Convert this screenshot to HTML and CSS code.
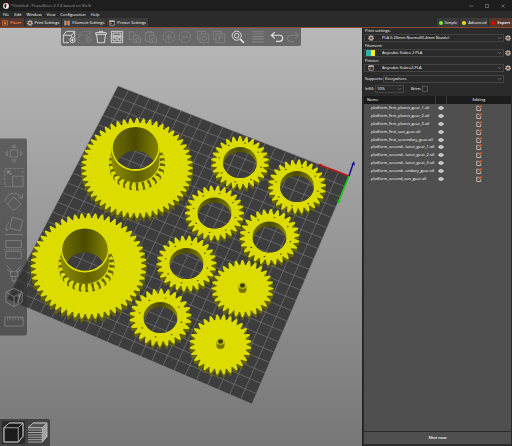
FILE: index.html
```html
<!DOCTYPE html>
<html lang="en">
<head>
<meta charset="utf-8">
<title>*Untitled - PrusaSlicer-2.7.4 based on Slic3r</title>
<link rel="stylesheet" href="styles.css">
</head>
<body>
<svg class="defs" aria-hidden="true">
  <symbol id="chev" viewBox="0 0 5 4"><path d="M.7 1 2.5 2.8 4.3 1" fill="none" stroke="#8c8c8c" stroke-width=".6"/></symbol>
  <symbol id="cog" viewBox="0 0 12 12"><circle cx="6" cy="6" r="4.6" fill="none" stroke="#c9c1bb" stroke-width="2.2" stroke-dasharray="2.4 1.2"/><circle cx="6" cy="6" r="3.8" fill="#cfc7c2"/><circle cx="6" cy="6" r="2.4" fill="#8a4a2a"/></symbol>
  <symbol id="eye" viewBox="0 0 12 8"><path d="M0 4Q6-4 12 4Q6 12 0 4Z" fill="#d6d6d6"/><circle cx="6" cy="4" r="1.3" fill="#8b8b8b"/></symbol>
  <symbol id="edit" viewBox="0 0 12 12"><path d="M7 2.5H1.5V11H9.500V6" fill="none" stroke="#d8c9c0" stroke-width="1.600"/><path d="M5 7.500 9.500 2.500" stroke="#d2622e" stroke-width="2"/><circle cx="9.600" cy="2.600" r="2.300" fill="#d2622e"/></symbol>
  <symbol id="printer" viewBox="0 0 12 12"><path d="M1.500 10.500V1.500H10.500V10.500Z" fill="#222" stroke="#c9c9c9" stroke-width="1.300"/><path d="M1 2.500H11" stroke="#ddd" stroke-width="2"/><path d="M3 5.500H6V8H3Z" fill="#e06a2c"/></symbol>
  <symbol id="spool" viewBox="0 0 12 12"><path d="M1 1H3.500V11H1ZM8.500 1H11V11H8.500Z" fill="#cfc7c2"/><path d="M3.500 2H8.500V10H3.500Z" fill="#c4602e"/></symbol>
  <symbol id="plater" viewBox="0 0 12 12"><path d="M1 1.500H11V10.500H1Z" fill="none" stroke="#e0703a" stroke-width="1.400"/><path d="M3.500 3.500H8.500V8.500H3.500Z" fill="#ed6b21"/></symbol>
</svg>

<header class="head">
  <div class="titlebar">
    <svg class="logo" viewBox="0 0 12 12"><circle cx="6" cy="6" r="5.800" fill="#eee"/><path d="M6 1Q1 4 3 8L6 11Z" fill="#1b1b1b"/><path d="M7 1.500Q9 3 7.500 6H5.500Q5.500 3 7 1.500Z" fill="#ed6b21"/></svg>
    <span class="title">*Untitled - PrusaSlicer-2.7.4 based on Slic3r</span>
    <div class="wins">
      <button aria-label="Minimize"><svg viewBox="0 0 6 6"><path d="M1 3H5"/></svg></button>
      <button aria-label="Maximize"><svg viewBox="0 0 6 6"><path d="M1.500 1.500H4.500V4.500H1.500Z"/></svg></button>
      <button aria-label="Close"><svg viewBox="0 0 6 6"><path d="M1.500 1.500 4.500 4.500M4.500 1.500 1.500 4.500"/></svg></button>
    </div>
  </div>
  <nav class="menu">
    <button>File</button><button>Edit</button><button>Window</button><button>View</button><button>Configuration</button><button>Help</button>
  </nav>
  <div class="tabs">
    <button class="tab on"><svg><use href="#plater"/></svg>Plater</button>
    <button class="tab"><svg><use href="#cog"/></svg>Print Settings</button>
    <button class="tab"><svg><use href="#spool"/></svg>Filament Settings</button>
    <button class="tab"><svg><use href="#printer"/></svg>Printer Settings</button>
    <div class="modes">
      <button class="tab"><i class="dot green"></i>Simple</button>
      <button class="tab"><i class="dot amber"></i>Advanced</button>
      <button class="tab on light"><i class="dot red"></i>Expert</button>
    </div>
  </div>
</header>

<main class="work">
  <section class="view" aria-label="3D view">
    <svg class="scene" id="scene" viewBox="0 28 362 418" preserveAspectRatio="xMidYMid slice"></svg>

    <div class="toolbar">
      <div class="grp">
        <button aria-label="Add"><svg viewBox="0 0 16 16"><path d="M1.500 6 5 1.500H14.500L11 6ZM1.500 6V14.500H8M11 6V8M14.500 1.500V8.500"/><circle cx="12" cy="11.500" r="3"/><path d="M12 9.800V13.200M10.300 11.500H13.700"/></svg></button>
        <button disabled aria-label="Delete"><svg viewBox="0 0 16 16"><path stroke-dasharray="1.500 1" d="M1.500 6 5 1.500H14.500L11 6ZM1.500 6V14.500H8M11 6V8M14.500 1.500V8.500"/><circle cx="12" cy="11.500" r="3"/><path d="M10.300 11.500H13.700"/></svg></button>
        <button aria-label="Delete all"><svg viewBox="0 0 16 16"><path d="M2 3H14V5H2ZM6 3V1.500H10V3M3 5 4 14.500H12L13 5"/></svg></button>
        <button aria-label="Arrange"><svg viewBox="0 0 16 16"><path d="M1.500 1.500H14.500V14.500H1.500ZM3.500 3.500H12.500V6.500H3.500ZM3.500 9H7V12.500H3.500ZM9 9H12.500V12.500H9ZM1.500 7.800H14.500"/></svg></button>
      </div>
      <div class="grp">
        <button disabled aria-label="Copy"><svg viewBox="0 0 16 16"><path d="M6 11H1.500V2H6L9 5V6M6.500 6H11L14.500 9V14.500H6.500Z"/><circle cx="10.500" cy="11" r="1.800"/></svg></button>
        <button disabled aria-label="Paste"><svg viewBox="0 0 16 16"><path d="M6 13H1.500V3H11V6M4 3V1.500H8.500V3M6.500 6H11L14.500 9V14.500H6.500Z"/><circle cx="10.500" cy="11" r="1.800"/></svg></button>
      </div>
      <div class="grp">
        <button disabled aria-label="Add instance"><svg viewBox="0 0 16 16"><circle cx="8" cy="8" r="6.500" stroke-dasharray="3 1"/><path d="M8 4.500V11.500M4.500 8H11.500"/></svg></button>
        <button disabled aria-label="Remove instance"><svg viewBox="0 0 16 16"><circle cx="8" cy="8" r="6.500" stroke-dasharray="3 1"/><path d="M4.500 8H11.500"/></svg></button>
      </div>
      <div class="grp">
        <button disabled aria-label="Split to objects"><svg viewBox="0 0 16 16"><path d="M4 11H1.500V1.500H11V4M4.500 4.500H14.500V14.500H4.500Z"/><circle cx="9.500" cy="9.500" r="2.500"/></svg></button>
        <button disabled aria-label="Split to parts"><svg viewBox="0 0 16 16"><path d="M4 11H1.500V1.500H11V4M4.500 4.500H14.500V14.500H4.500ZM8 12.500V7H10Q11.500 7 11.500 8.500T10 10H8"/></svg></button>
      </div>
      <div class="grp one"><button aria-label="Search"><svg viewBox="0 0 16 16"><circle cx="6.500" cy="6.500" r="5.200"/><circle cx="6.500" cy="6.500" r="2.600"/><path stroke-width="2" d="M10.500 10.500 14.800 14.800"/></svg></button></div>
      <div class="grp one"><button disabled aria-label="Variable layer height"><svg viewBox="0 0 16 16"><path d="M1.500 2H14.500M1.500 4.500H14.500" /><path stroke-width="1.500" d="M1.500 7.500H14.500M1.500 10.500H14.500M1.500 13.500H14.500"/></svg></button></div>
      <div class="grp">
        <button aria-label="Undo"><svg viewBox="0 0 16 16"><path stroke-width="1.300" d="M5.500 2.500 1.500 6 5.500 9.500M1.500 6H11Q14.500 6 14.500 9.500T11 13H7"/></svg></button>
        <button disabled aria-label="Redo"><svg viewBox="0 0 16 16"><path d="M10.500 2.500 14.500 6 10.500 9.500M14.500 6H5Q1.500 6 1.500 9.500T5 13H9"/></svg></button>
      </div>
    </div>

    <div class="gizmos">
      <button aria-label="Move"><svg viewBox="0 0 22 22"><path d="M7 7H15V15H7ZM8.500 4 11 1 13.500 4ZM8.500 18 11 21 13.500 18ZM4 8.500 1 11 4 13.500ZM18 8.500 21 11 18 13.500Z"/></svg></button>
      <button aria-label="Scale"><svg viewBox="0 0 22 22"><path d="M9.500 9.500H21V21H9.500Z"/><path stroke-dasharray="3 1.500" d="M8 21H1V1H21V8"/><path stroke-width="1.500" d="M8 8 4 4M4 7V4H7"/></svg></button>
      <button aria-label="Rotate"><svg viewBox="0 0 22 22"><path d="M11 6 18.500 13.500 11 21 3.500 13.500ZM1 11Q3 2 11 2 16 2 19 6M20.500 2V7H15.500"/></svg></button>
      <button aria-label="Place on face"><svg viewBox="0 0 22 22"><path d="M9 2 20.500 5 18 17 6.500 14ZM6 7Q2 10 3 16M1 14 3 17 5.500 14.500M1 21H21"/></svg></button>
      <button aria-label="Cut"><svg viewBox="0 0 22 22"><path d="M2 9V1H19V9ZM2 13H19V21H2Z"/><path stroke-dasharray="1.500 1" d="M0 11H22"/></svg></button>
      <button aria-label="Paint supports"><svg viewBox="0 0 22 22"><path d="M3 2 9 9M19 2 13 9M3 6 8 10M19 6 14 10M7 9H15V14H7ZM9 14V19H13V14M11 19V22"/></svg></button>
      <button aria-label="Seam painting"><svg viewBox="0 0 22 22"><path d="M11 1 20 5V16L11 21 2 16V5ZM2 5 11 10 20 5M11 10V21"/><path stroke-width="1.500" d="M15 10 18 8 15 17"/></svg></button>
      <button aria-label="Measure"><svg viewBox="0 0 22 22"><path d="M1 6H21V16H1ZM4 6V10M7 6V9M10 6V10M13 6V9M16 6V10M19 6V9"/></svg></button>
    </div>

    <div class="modesw">
      <button class="sel" aria-label="3D editor view"><svg viewBox="0 0 22 22"><path fill="#1b1b1b" d="M1 6 6.500 1H21V15L16 21H1Z"/><path d="M1 6H16V21H1ZM1 6 6.500 1H21L16 6M21 1V15L16 21"/></svg></button>
      <button aria-label="Preview"><svg viewBox="0 0 22 22"><path fill="#555" d="M1 6 6.500 1H21L16 6Z"/><path fill="#999" d="M16 6 21 1V15L16 21Z"/><path d="M1 6 6.500 1H21L16 6H1M1 8.500H16L21 3.500M1 11H16L21 6M1 13.500H16L21 8.500M1 16H16L21 11M1 18.500H16L21 13.500M1 21H16L21 15"/></svg></button>
    </div>
  </section>

  <aside class="side">
    <label class="cap" for="ps">Print settings:</label>
    <div class="row">
      <div class="pick icon"><svg class="lead"><use href="#cog"/></svg><select id="ps"><option>PLA 0.20mm Normal(0.4mm Nozzle)</option></select><svg class="chev"><use href="#chev"/></svg></div>
      <button class="cogb" aria-label="Edit print preset"><svg><use href="#cog"/></svg></button>
    </div>
    <label class="cap" for="fs">Filament:</label>
    <div class="row">
      <div class="pick icon"><span class="lead swatch"></span><select id="fs"><option>Anycubic Kobra 2 PLA</option></select><svg class="chev"><use href="#chev"/></svg></div>
      <button class="cogb" aria-label="Edit filament preset"><svg><use href="#cog"/></svg></button>
    </div>
    <label class="cap" for="pr">Printer:</label>
    <div class="row">
      <div class="pick icon"><svg class="lead"><use href="#printer"/></svg><select id="pr"><option>Anycubic Kobra2-PLA</option></select><svg class="chev"><use href="#chev"/></svg></div>
      <button class="cogb" aria-label="Edit printer preset"><svg><use href="#cog"/></svg></button>
    </div>
    <div class="row opts sup">
      <label for="su">Supports:</label>
      <div class="pick"><select id="su"><option>Everywhere</option></select><svg class="chev"><use href="#chev"/></svg></div>
    </div>
    <div class="row opts">
      <label for="in">Infill:</label>
      <div class="pick short"><select id="in"><option>10%</option></select><svg class="chev"><use href="#chev"/></svg></div>
      <label class="brim" for="br">Brim:</label><input type="checkbox" id="br">
    </div>
    <div class="list">
      <table>
        <thead><tr><th>Name</th><th class="ce"></th><th class="ed">Editing</th></tr></thead>
        <tbody id="objects"></tbody>
      </table>
    </div>
    <button class="slice">Slice now</button>
  </aside>
</main>
<script src="script.js"></script>
</body>
</html>
```
FILE: styles.css
```css
* { box-sizing: border-box; }
html, body { height: 100%; }
body {
  margin: 0;
  display: flex;
  flex-direction: column;
  background: #2b2b2b;
  color: #fff;
  font: 4px/6px "Open Sans", "Noto Sans", sans-serif;
  overflow: hidden;
}
button, select, input { font: inherit; color: inherit; margin: 0; padding: 0; border: 0; background: none; }
button { display: flex; align-items: center; justify-content: center; }
svg { display: block; }
.defs { position: absolute; width: 0; height: 0; }

.head { border-bottom: 1px solid #8a4a30; }
.titlebar { display: flex; align-items: center; height: 11px; background: #1e1e1e; padding-left: 3px; color: #a0a0a0; }
.logo { width: 6px; height: 6px; margin-right: 2px; }
.wins { margin-left: auto; display: flex; gap: 10px; padding-right: 6px; }
.wins svg { width: 6px; height: 6px; fill: none; stroke: #a0a0a0; stroke-width: .5; }
.menu { display: flex; gap: 5px; padding: 0 3px; height: 7px; align-items: center; }
.tabs { display: flex; gap: 1px; height: 9px; }
.tab { gap: 2px; padding: 0 2px; background: #3a3a3a; }
.tab svg { width: 6px; height: 6px; }
.tab.on { background: #55372b; color: #ff8446; font-weight: 600; }
.tab.light { color: #fff; }
.modes { display: flex; gap: 1px; margin-left: auto; }
.dot { width: 4px; height: 4px; border-radius: 50%; }
.green { background: #7dee2d; }
.amber { background: #ffdc00; }
.red { background: #e70000; }

.work { flex: 1; display: flex; min-height: 0; }
.view { position: relative; flex: 1; min-width: 0; background: linear-gradient(#b8b8b8, #777); }
.scene { width: 100%; height: 100%; }

.toolbar {
  position: absolute; top: 0; left: 50%; transform: translateX(-50%);
  display: flex; gap: 2px; padding: 0 0 1px;
  background: #686868; border-radius: 0 0 2px 2px;
}
.grp { display: flex; }
.one { padding: 0 1px; }
.toolbar button { width: 16px; height: 17px; }
.toolbar svg { width: 14px; height: 14px; fill: none; stroke: #e2e2e2; stroke-width: 1; }
.toolbar button:disabled svg { stroke: #838383; }

.gizmos {
  position: absolute; left: 0; top: 50%; transform: translateY(-50%);
  display: flex; flex-direction: column; gap: 4px; padding: 5px 3px 4px;
  background: rgba(50, 50, 50, .62); border-radius: 0 2px 2px 0;
}
.gizmos button { width: 21px; height: 20px; }
.gizmos svg { width: 20px; height: 20px; fill: none; stroke: #858585; stroke-width: .9; }

.modesw { position: absolute; left: 0; bottom: 0; display: flex; gap: 1px; padding: 2px 1px 2px 2px; background: #424242; border-radius: 0 2px 0 0; }
.modesw button { width: 23px; height: 23px; }
.modesw svg { width: 21px; height: 21px; fill: none; stroke: #b4b4b4; stroke-width: .9; }
.modesw .sel { background: #2a2a2a; }

.side { width: 150px; display: flex; flex-direction: column; padding: 0 1px 2px 1px; border-left: 1px solid #242424; }
.cap { height: 6px; padding-left: 1px; }
.row { display: flex; align-items: center; height: 8px; margin-bottom: 1px; }
.pick { position: relative; flex: 1; height: 8px; border: 1px solid #444; }
.pick select { display: block; appearance: none; width: 100%; height: 100%; padding-left: 1px; line-height: 6px; }
.pick.icon select { padding-left: 17px; }
.chev { position: absolute; right: 1px; top: 1px; width: 5px; height: 4px; }
.lead { position: absolute; left: 3px; top: 0; width: 6px; height: 6px; }
.lead.swatch { left: 1px; width: 9px; background: linear-gradient(90deg, #29b2b2 60%, #ffee1c 60%); }
.cogb { width: 7px; height: 8px; }
.cogb svg { width: 6px; height: 6px; }
.opts { margin-bottom: 2px; }
.opts label { width: 19px; padding-left: 1px; }
.sup { margin-top: 2px; padding-right: 7px; }
.opts:not(.sup) label:first-child { width: 11px; }
.short { flex: 0 0 29px; }
.opts .brim { width: auto; margin: 0 1px 0 6px; }
.opts input { appearance: none; width: 6px; height: 6px; border: 1px solid #555; }

.list { flex: 1; background: #4f4f4f; min-height: 0; margin-top: 1px; }
table { width: 100%; height: 87px; border-collapse: collapse; table-layout: fixed; }
th, td { padding: 0; font-weight: 400; text-align: left; }
th { height: 8px; background: #1c1c1c; padding-left: 3px; }
th.ce { width: 11px; border: solid #3a3a3a; border-width: 0 1px; }
th.ed { width: 65px; text-align: center; padding: 0; }
td:first-child { padding-left: 7px; white-space: nowrap; }
td svg { margin: 0 auto; }
.eye { width: 6px; height: 4px; }
.edit { width: 6px; height: 6px; }
.slice { height: 12px; margin-top: 1px; background: #4f4f4f; color: #fff; font-weight: 600; }
```
FILE: script.js
```js
const scene = document.getElementById('scene');
const f = n => n.toFixed(1);
let out = '';

// Print bed: four projected corners, 22 x 22 cells
const A = [118, 86], B = [349, 176], C = [252, 404], D = [7, 299];
const mix = (p, q, t) => [p[0] + (q[0] - p[0]) * t, p[1] + (q[1] - p[1]) * t];
let grid = '';
for (let i = 0; i <= 22; i++) {
  const t = i / 22;
  for (const [p, q] of [[mix(A, B, t), mix(D, C, t)], [mix(A, D, t), mix(B, C, t)]])
    grid += `M${f(p[0])} ${f(p[1])}L${f(q[0])} ${f(q[1])}`;
}
const bed = `<path d="M${A}L${B}L${C}L${D}Z" fill="#3d3d3d"/><path d="${grid}" stroke="#8a8a8a" stroke-width=".5" fill="none"/>`;
out += `<defs><g id="bed">${bed}</g>
<linearGradient id="bore"><stop offset="0" stop-color="#6e6d00"/><stop offset=".5" stop-color="#4c4b00"/><stop offset="1" stop-color="#858400"/></linearGradient>
<linearGradient id="tube"><stop offset="0" stop-color="#8d8c00"/><stop offset=".55" stop-color="#626100"/><stop offset="1" stop-color="#858400"/></linearGradient></defs>`;
out += '<use href="#bed"/>';

const ell = (x, y, rx, ry) => `M${f(x - rx)} ${f(y)}a${rx} ${ry} 0 1 0 ${2 * rx} 0a${rx} ${ry} 0 1 0 ${-2 * rx} 0Z`;

function teeth(x, y, rx, ry, n, depth, phase = 0) {
  let d = '';
  for (let i = 0; i < n; i++)
    for (const [o, k] of [[0, 1], [.2, 1], [.38, .45], [.5, 0], [.7, 0], [.82, .45]]) {
      const a = (i + o - .1 + phase) / n * 2 * Math.PI - Math.PI / 2, c = depth * (1 - k);
      d += `${d ? 'L' : 'M'}${f(x + (rx - c) * Math.cos(a))} ${f(y + (ry - c) * Math.sin(a))}`;
    }
  return d + 'Z';
}

function solid(d, h, top = '#dcdc00') {
  let s = '';
  for (let k = h; k > 0; k--) s += `<path d="${d}" transform="translate(0 ${k})" fill="#656400" fill-rule="evenodd"/>`;
  return s + `<path d="${d}" fill="${top}" fill-rule="evenodd"/>`;
}

// Opening that shows the inner wall and the bed below
let clip = 0;
function bore(x, y, rx, ry, rx2, ry2, drop) {
  const a = 'c' + clip++, b = 'c' + clip++;
  return `<clipPath id="${a}"><path d="${ell(x, y, rx, ry)}"/></clipPath><clipPath id="${b}"><path d="${ell(x, y + drop, rx2, ry2)}"/></clipPath>
<path d="${ell(x, y, rx, ry)}" fill="url(#bore)"/><g clip-path="url(#${a})"><g clip-path="url(#${b})"><use href="#bed"/></g></g>`;
}

function ring(x, y, rx, ry, phase) {
  out += solid(teeth(x, y, rx, ry, 26, 5, phase), 3);
  out += bore(x, y, 17, 15.5, 17, 15.5, 5);
  for (let i = 0; i < 8; i++) {
    const a = (i + .3) * Math.PI / 4;
    out += `<ellipse cx="${f(x + 21.5 * Math.cos(a))}" cy="${f(y + 20 * Math.sin(a))}" rx=".9" ry=".6" fill="#4d4c00"/>`;
  }
}

function sun(x, y, rx, ry, phase) {
  out += solid(teeth(x, y, rx, ry, 28, 5, phase), 3);
  out += `<path d="M${x - 4} ${y - 3}V${y + 1}a4 3.500 0 0 0 8 0V${y - 3}Z" fill="#777600"/><ellipse cx="${x}" cy="${y - 3}" rx="4" ry="3.300" fill="#c9c900"/><ellipse cx="${x}" cy="${y - 3}" rx="2.600" ry="2.200" fill="#424200"/>`;
}

function planet(x, y, rx, ry, cx, cy) {
  out += solid(teeth(x, y, rx, ry, 52, 5), 4);
  // Small gear under the tube: dark gaps between teeth that blend into the face
  for (let i = 0; i < 17; i++) {
    const a = (-22 + i * 14) * Math.PI / 180, c = Math.cos(a), s = Math.sin(a);
    const gx = cx + 1.5, gy = cy + 14, w = 1.5;
    const x1 = gx + 23 * c, y1 = gy + 20 * s, x2 = gx + 28 * c, y2 = gy + 25 * s;
    out += `<path d="M${f(x1 - w * s)} ${f(y1 + w * c)}L${f(x2 - s)} ${f(y2 + c)}L${f(x2 - s)} ${f(y2 + c + 3)}L${f(x2 + 2 * s)} ${f(y2 - 2 * c + 3)}L${f(x2 + s)} ${f(y2 - c)}L${f(x1 + w * s)} ${f(y1 - w * c)}Z" fill="#656400"/>`;
  }
  out += `<path d="M${cx - 24} ${cy}V${cy + 12}a24 22 0 0 0 48 0V${cy}Z" fill="url(#tube)"/><ellipse cx="${cx}" cy="${cy}" rx="24" ry="22.500" fill="#e0e000"/>`;
  out += bore(cx, cy - .5, 22.8, 21, 20, 18, 21);
}

planet(137, 168, 56, 50, 135.5, 148.5);
ring(240, 162.5, 29, 26.5, 0);
ring(297, 186.5, 29, 27, .3);
ring(214.5, 213, 29.5, 27.5, .5);
ring(269.5, 237, 30, 28, .2);
planet(88.5, 266, 58, 53, 85, 250);
ring(186.5, 263.5, 30, 28, .4);
sun(242.5, 288.5, 31, 28.5, 0);
ring(160.5, 317.5, 31, 29, .1);
sun(220.5, 344.5, 31, 30, .5);

// Origin axes
out += `<path d="M349 176 320 165" stroke="#c01818" stroke-width="1.500"/><path d="M317.500 164 322 164 321 167Z" fill="#c01818"/>
<path d="M349 176 339 201" stroke="#10d010" stroke-width="1.500"/><path d="M338 204 337.500 199.500 341 201Z" fill="#10d010"/>
<path d="M349 176 353 164" stroke="#14149a" stroke-width="1.500"/><path d="M354 161 351.500 164.500 355 165.500Z" fill="#14149a"/>`;
scene.innerHTML = out;

const names = ['platform_first_planet_gear_1.stl', 'platform_first_planet_gear_2.stl', 'platform_first_planet_gear_3.stl',
  'platform_first_sun_gear.stl', 'platform_first_secondary_gear.stl', 'platform_second...lanet_gear_1.stl',
  'platform_second...lanet_gear_2.stl', 'platform_second...lanet_gear_3.stl', 'platform_second...ondary_gear.stl', 'platform_second_sun_gear.stl'];
document.getElementById('objects').innerHTML = names.map(n =>
  `<tr><td>${n}</td><td><svg class="eye"><use href="#eye"/></svg></td><td><svg class="edit"><use href="#edit"/></svg></td></tr>`).join('');
```
